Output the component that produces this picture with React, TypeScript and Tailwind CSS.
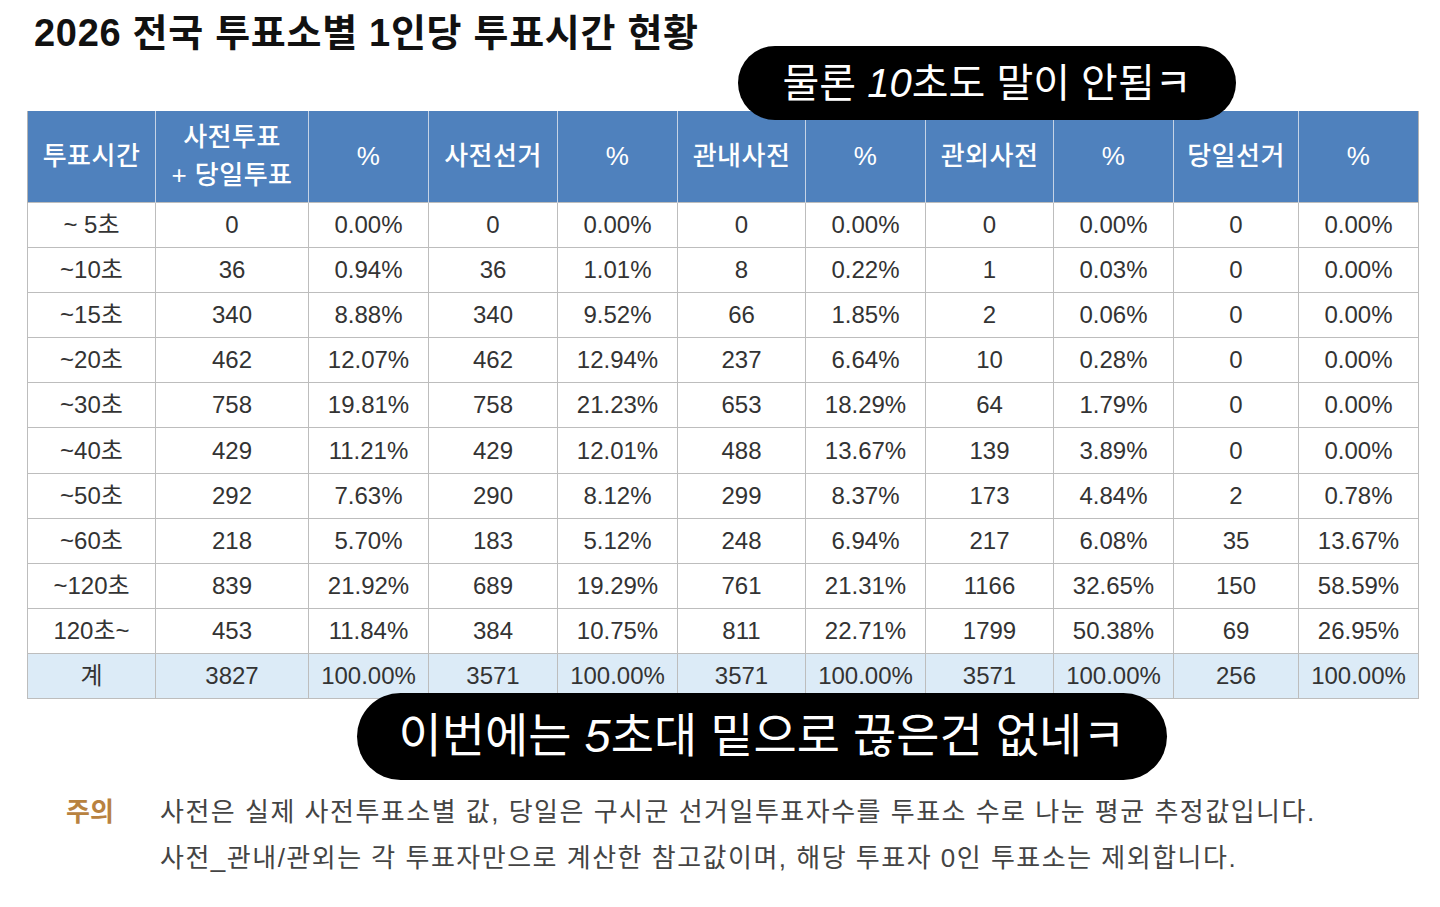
import React from 'react';

const kr = "font-['Liberation_Sans','Noto_Sans_CJK_KR',sans-serif]";

const columns = [
  { label: ['투표시간'], width: 'w-[128px]' },
  { label: ['사전투표', '+ 당일투표'], width: 'w-[153px]' },
  { label: ['%'], width: 'w-[120px]' },
  { label: ['사전선거'], width: 'w-[129px]' },
  { label: ['%'], width: 'w-[120px]' },
  { label: ['관내사전'], width: 'w-[128px]' },
  { label: ['%'], width: 'w-[120px]' },
  { label: ['관외사전'], width: 'w-[128px]' },
  { label: ['%'], width: 'w-[120px]' },
  { label: ['당일선거'], width: 'w-[125px]' },
  { label: ['%'], width: 'w-[120px]' },
];

const rows: string[][] = [
  ['~ 5초', '0', '0.00%', '0', '0.00%', '0', '0.00%', '0', '0.00%', '0', '0.00%'],
  ['~10초', '36', '0.94%', '36', '1.01%', '8', '0.22%', '1', '0.03%', '0', '0.00%'],
  ['~15초', '340', '8.88%', '340', '9.52%', '66', '1.85%', '2', '0.06%', '0', '0.00%'],
  ['~20초', '462', '12.07%', '462', '12.94%', '237', '6.64%', '10', '0.28%', '0', '0.00%'],
  ['~30초', '758', '19.81%', '758', '21.23%', '653', '18.29%', '64', '1.79%', '0', '0.00%'],
  ['~40초', '429', '11.21%', '429', '12.01%', '488', '13.67%', '139', '3.89%', '0', '0.00%'],
  ['~50초', '292', '7.63%', '290', '8.12%', '299', '8.37%', '173', '4.84%', '2', '0.78%'],
  ['~60초', '218', '5.70%', '183', '5.12%', '248', '6.94%', '217', '6.08%', '35', '13.67%'],
  ['~120초', '839', '21.92%', '689', '19.29%', '761', '21.31%', '1166', '32.65%', '150', '58.59%'],
  ['120초~', '453', '11.84%', '384', '10.75%', '811', '22.71%', '1799', '50.38%', '69', '26.95%'],
];

const total = ['계', '3827', '100.00%', '3571', '100.00%', '3571', '100.00%', '3571', '100.00%', '256', '100.00%'];

function Caption({ children, className }: { children: React.ReactNode; className: string }) {
  return (
    <div
      className={`absolute flex items-center justify-center rounded-full bg-black text-white ${kr} ${className}`}
    >
      {children}
    </div>
  );
}

export default function App() {
  return (
    <div className={`relative h-[907px] w-[1440px] overflow-hidden bg-white ${kr}`}>
      <h1 className="pl-[34px] pt-[11px] text-[38px] font-bold leading-[44px] tracking-[0.7px] text-[#111]">
        2026 전국 투표소별 1인당 투표시간 현황
      </h1>

      <div className="mt-[56px] pl-[27px]">
        <table className="table-fixed border-collapse text-[24px] text-[#333]">
          <thead>
            <tr className="h-[91px] bg-[#4f81bd]">
              {columns.map((c, i) => (
                <th
                  key={i}
                  className={`${c.width} border-x border-[#c5d3e6] px-1 text-center text-[26px] font-medium leading-[38px] tracking-[0.5px] text-white first:border-l-[#b4b4b4] last:border-r-[#b4b4b4]`}
                >
                  {c.label.map((l) => (
                    <div key={l}>{l}</div>
                  ))}
                </th>
              ))}
            </tr>
          </thead>
          <tbody>
            {rows.map((r, i) => (
              <tr key={i} className="h-[45.2px]">
                {r.map((v, j) => (
                  <td key={j} className="border border-[#bdbdbd] p-0 text-center leading-[30px]">
                    {v}
                  </td>
                ))}
              </tr>
            ))}
            <tr className="h-[45px] bg-[#dcebf7]">
              {total.map((v, j) => (
                <td key={j} className="border border-[#bdbdbd] p-0 text-center leading-[30px]">
                  {v}
                </td>
              ))}
            </tr>
          </tbody>
        </table>
      </div>

      <div className="mt-[97px] flex flex-col gap-[14px] pl-[66px] text-[26px] leading-[32px] text-[#444]">
        <div className="flex">
          <span className="w-[94px] shrink-0 font-semibold text-[#b8823f]">주의</span>
          <span className="tracking-[1.5px]">
            사전은 실제 사전투표소별 값, 당일은 구시군 선거일투표자수를 투표소 수로 나눈 평균 추정값입니다.
          </span>
        </div>
        <div className="flex">
          <span className="w-[94px] shrink-0" />
          <span className="tracking-[1.5px]">
            사전_관내/관외는 각 투표자만으로 계산한 참고값이며, 해당 투표자 0인 투표소는 제외합니다.
          </span>
        </div>
      </div>

      <Caption className="left-[738px] top-[46px] h-[74px] w-[498px] text-[40px]">
        <span>
          물론 <i>10</i>초도 말이 안됨ㅋ
        </span>
      </Caption>

      <Caption className="left-[357px] top-[693px] h-[87px] w-[810px] text-[47px]">
        <span>
          이번에는 <i>5</i>초대 밑으로 끊은건 없네ㅋ
        </span>
      </Caption>
    </div>
  );
}
